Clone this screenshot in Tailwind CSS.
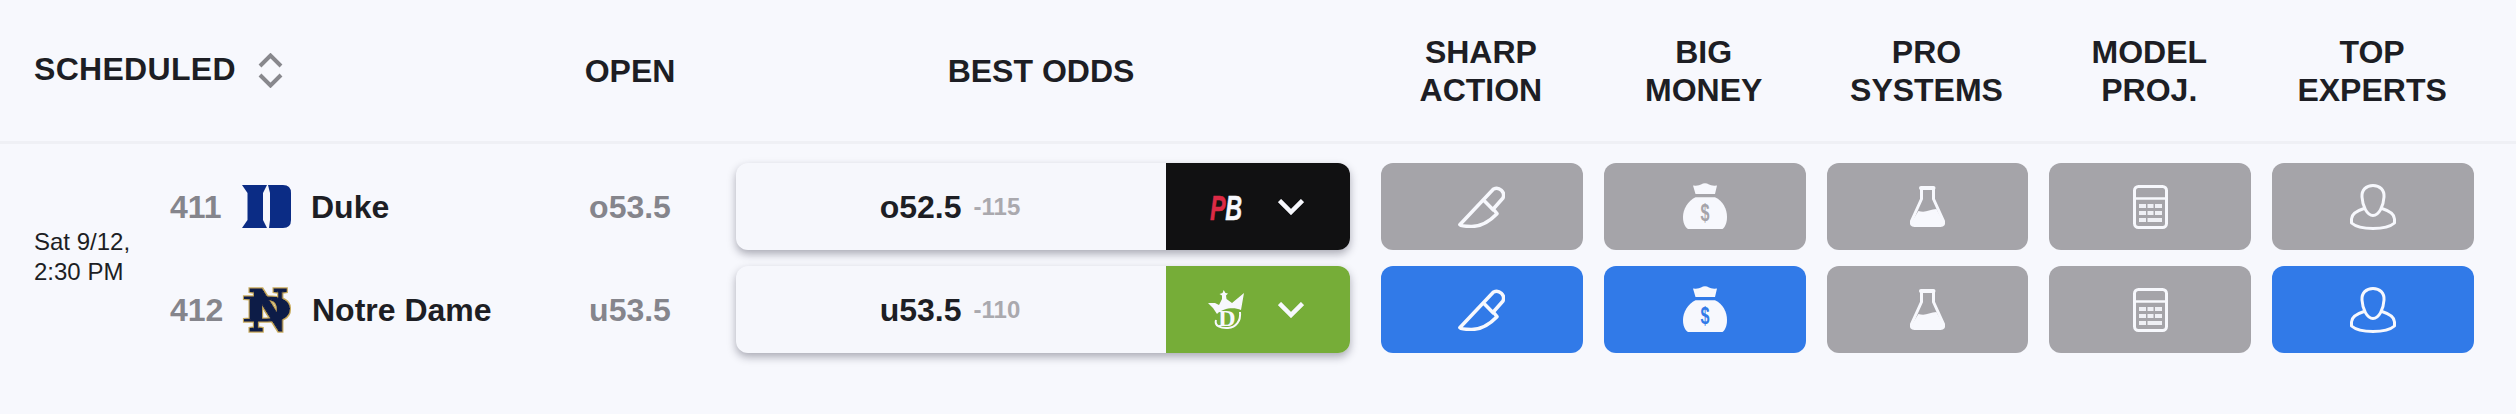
<!DOCTYPE html>
<html lang="en">
<head>
    <meta charset="UTF-8">
    <meta name="viewport" content="width=device-width, initial-scale=1.0">
    <title>Game Odds</title>
    <script src="https://cdn.jsdelivr.net/npm/@tailwindcss/browser@4"></script>
</head>
<body class="bg-[#f7f8fd] font-['Liberation_Sans',Arial,sans-serif] text-[#1d1e24] h-[414px]">

    <!-- icons shared by the signal buttons -->
    <svg class="absolute w-0 h-0">
        <filter id="gold" x="-10%" y="-10%" width="120%" height="120%">
            <feMorphology in="SourceAlpha" operator="dilate" radius="0.9" result="fat"/>
            <feFlood flood-color="#c8ab5c"/>
            <feComposite in2="fat" operator="in" result="edge"/>
            <feMerge>
                <feMergeNode in="edge"/>
                <feMergeNode in="SourceGraphic"/>
            </feMerge>
        </filter>
        <symbol id="knife" viewBox="0 0 47 42">
            <path d="M1.8 38.8 L35.5 3 A7 7 0 0 1 45 12 L35.3 23 L39 27.7 C30 37 20 40.6 13 40.4 C6 40.4 2 40 1.8 38.8 Z M27 15.5 L35.3 24" fill="none" stroke="#f7f8fd" stroke-width="3.5" stroke-linejoin="round" stroke-linecap="round"/>
        </symbol>
        <symbol id="bag" viewBox="0 0 44 47">
            <path d="M10 2.5 Q16 3 18 1.5 Q22 -1 26 1.5 Q28 3 34 2.5 L32 11 H12.5 Z" fill="#f7f8fd"/>
            <path d="M12.5 14.3 H32 C40 18 44 26 44 34 C44 40 42 44 39.5 46 H5 C2 44 0 40 0 34 C0 26 5 18 12.5 14.3 Z" fill="#f7f8fd"/>
        </symbol>
        <symbol id="flask" viewBox="0 0 35 41">
            <rect x="9" y="0" width="16.5" height="4" rx="2" fill="#f7f8fd"/>
            <path d="M11.5 3 V13 L1.5 35 Q0.5 39.5 4.5 39.5 H30.5 Q34.5 39.5 33.5 35 L23.5 13 V3" fill="none" stroke="#f7f8fd" stroke-width="3" stroke-linejoin="round"/>
            <path d="M8.4 25 Q14 26.5 19 24.5 Q23 23 26.4 23 L33.5 36 Q34 40 30.5 40 H4.5 Q1 40 1.5 36 Z" fill="#f7f8fd"/>
        </symbol>
        <symbol id="calc" viewBox="0 0 35 44">
            <rect x="1.5" y="1.5" width="32" height="41" rx="4" fill="none" stroke="#f7f8fd" stroke-width="3"/>
            <path d="M2 13.5 H33" stroke="#f7f8fd" stroke-width="2.5"/>
            <path d="M6 19 h7 v4 h-7 Z M14.5 19 h6 v4 h-6 Z M22 19 h7 v4 h-7 Z M6 26 h7 v4 h-7 Z M14.5 26 h6 v4 h-6 Z M22 26 h7 v4 h-7 Z M6 33 h7 v4 h-7 Z M14.5 33 h14.5 v4 h-14.5 Z" fill="#f7f8fd" fill-opacity="0.9"/>
        </symbol>
        <symbol id="user" viewBox="0 0 46 46">
            <path d="M23 1.5 C30 1.5 34.5 6 34 13 C33.5 22 29 31.5 23 31.5 C17 31.5 12.5 22 12 13 C11.5 6 16 1.5 23 1.5 Z" fill="none" stroke="#f7f8fd" stroke-width="3"/>
            <path d="M14 24.5 C6 27 1.5 30 1.5 35 V39 C6 43 15 44.5 23 44.5 C31 44.5 40 43 44.5 39 V35 C44.5 30 40 27 32 24.5" fill="none" stroke="#f7f8fd" stroke-width="3" stroke-linejoin="round"/>
        </symbol>
        <symbol id="chev" viewBox="0 0 26 16">
            <path d="M1.5 1.5 L13 13 L24.5 1.5" fill="none" stroke="#f7f8fd" stroke-width="4.5"/>
        </symbol>
    </svg>

    <!-- Header -->
    <div class="grid grid-cols-[560px_176px_614px_1fr] h-[144px] border-b-[3px] border-[#eff0f5] text-[32px] font-bold items-center">
        <div class="flex items-center pl-[34px]">
            <span class="-mt-1 tracking-[0.3px]">SCHEDULED</span>
            <svg class="ml-[22px] w-[25px] h-[35px]" viewBox="0 0 25 35" fill="none" stroke="#88888d" stroke-width="4">
                <path d="M2 13 L12.5 2.5 L23 13"/>
                <path d="M2 22 L12.5 32.5 L23 22"/>
            </svg>
        </div>
        <div class="text-center pr-[36px]">OPEN</div>
        <div class="text-center pr-[4px]">BEST ODDS</div>
        <div class="grid grid-cols-5 gap-[21px] ml-[30px] mr-[43px] text-center leading-[38px]">
            <div>SHARP<br>ACTION</div>
            <div>BIG<br>MONEY</div>
            <div>PRO<br>SYSTEMS</div>
            <div>MODEL<br>PROJ.</div>
            <div>TOP<br>EXPERTS</div>
        </div>
    </div>

    <!-- Game -->
    <div class="grid grid-cols-[170px_390px_176px_614px_1fr] grid-rows-[87px_87px] gap-y-4 pt-[19px] items-center">
        <div class="row-span-2 pl-[34px] text-2xl leading-[30px] -mt-[3px]">Sat 9/12,<br>2:30 PM</div>

        <!-- Duke -->
        <div class="flex items-center text-[32px] font-bold">
            <span class="w-[72px] text-[#85858c]">411</span>
            <svg class="w-[49px] h-[43px] mr-[20px]" viewBox="0 0 49 43" fill="#0b2c85">
                <path d="M0 0 H25 L21 8 V35 L25 43 H0 L5.5 35 V8 Z"/>
                <path d="M26 0 H41 Q49 0 49 8 V35 Q49 43 41 43 H27 L28 35 V8 Z"/>
            </svg>
            <span>Duke</span>
        </div>
        <div class="text-center pr-[36px] text-[32px] font-bold text-[#85858c]">o53.5</div>
        <div class="flex h-[87px] rounded-xl bg-[#f6f7fc] shadow-[0_4px_8px_rgba(30,30,50,0.35)] overflow-hidden">
            <div class="flex-1 flex items-center justify-center gap-3 pr-[2px]">
                <span class="text-[32px] font-bold">o52.5</span>
                <span class="text-2xl font-bold text-[#aaa9ae]">-115</span>
            </div>
            <div class="w-[184px] bg-[#111112] flex items-center pl-[44px]">
                <svg class="w-[32px] h-[26px] overflow-visible" viewBox="0 0 32 26">
                    <text transform="scale(0.65 1)" y="26" font-size="36" font-weight="700" font-style="italic" stroke-width="0.5"><tspan x="0" fill="#dc2a45" stroke="#dc2a45">P</tspan><tspan x="23.5" fill="#f7f8fd" stroke="#f7f8fd">B</tspan></text>
                </svg>
                <svg class="w-[26px] h-[16px] ml-[36px]"><use href="#chev"/></svg>
            </div>
        </div>
        <div class="grid grid-cols-5 gap-[21px] ml-[31px] mr-[42px] h-[87px]">
            <div class="rounded-xl flex items-center justify-center bg-[#a5a4a9]"><svg class="w-[47px] h-[42px]"><use href="#knife"/></svg></div>
            <div class="rounded-xl flex items-center justify-center bg-[#a5a4a9]">
                <svg class="w-[44px] h-[47px]" viewBox="0 0 44 47"><use href="#bag"/><text x="17.5" y="38" font-size="24" font-weight="700" textLength="9" lengthAdjust="spacingAndGlyphs" fill="#a5a4a9">$</text></svg>
            </div>
            <div class="rounded-xl flex items-center justify-center bg-[#a5a4a9]"><svg class="w-[35px] h-[41px]"><use href="#flask"/></svg></div>
            <div class="rounded-xl flex items-center justify-center bg-[#a5a4a9]"><svg class="w-[35px] h-[44px]"><use href="#calc"/></svg></div>
            <div class="rounded-xl flex items-center justify-center bg-[#a5a4a9]"><svg class="w-[46px] h-[46px]"><use href="#user"/></svg></div>
        </div>

        <!-- Notre Dame -->
        <div class="flex items-center text-[32px] font-bold">
            <span class="w-[73px] text-[#85858c]">412</span>
            <svg class="w-[50px] h-[46px] mr-[19px] overflow-visible" viewBox="0 0 50 46">
                <g filter="url(#gold)" font-family="'Liberation Serif',serif" font-weight="700" fill="#0c1f47" stroke="#0c1f47" stroke-width="1.4">
                    <text x="1" y="34" font-size="36" textLength="48" lengthAdjust="spacingAndGlyphs">D</text>
                    <text x="6" y="44" font-size="64" textLength="38" lengthAdjust="spacingAndGlyphs">N</text>
                </g>
            </svg>
            <span>Notre Dame</span>
        </div>
        <div class="text-center pr-[36px] text-[32px] font-bold text-[#85858c]">u53.5</div>
        <div class="flex h-[87px] rounded-xl bg-[#f6f7fc] shadow-[0_4px_8px_rgba(30,30,50,0.35)] overflow-hidden">
            <div class="flex-1 flex items-center justify-center gap-3 pr-[2px]">
                <span class="text-[32px] font-bold">u53.5</span>
                <span class="text-2xl font-bold text-[#aaa9ae]">-110</span>
            </div>
            <div class="w-[184px] bg-[#76ad38] flex items-center pl-[42px]">
                <svg class="w-[36px] h-[39px] overflow-visible" viewBox="0 0 36 39" fill="#f7f8fd">
                    <path d="M15.7 0 L17.5 3 L20 3.5 L18 5.5 L18.5 9 L24 13 L30 8 L36 3 L33 20 C26 17 15 18 9 24 L5 18 L0 13 L7 13 L11 15 L14 9 L14 5.5 L11.5 4 L14.5 3 Z"/>
                    <text x="19" y="36" text-anchor="middle" font-family="'Liberation Serif',serif" font-weight="700" font-size="24">D</text>
                    <path d="M8 30 C6 36 13 38.5 20 38 C28 37.5 33 31 32 22" fill="none" stroke="#f7f8fd" stroke-width="2"/>
                </svg>
                <svg class="w-[26px] h-[16px] ml-[34px]"><use href="#chev"/></svg>
            </div>
        </div>
        <div class="grid grid-cols-5 gap-[21px] ml-[31px] mr-[42px] h-[87px]">
            <div class="rounded-xl flex items-center justify-center bg-[#317ae8]"><svg class="w-[47px] h-[42px]"><use href="#knife"/></svg></div>
            <div class="rounded-xl flex items-center justify-center bg-[#317ae8]">
                <svg class="w-[44px] h-[47px]" viewBox="0 0 44 47"><use href="#bag"/><text x="17.5" y="38" font-size="24" font-weight="700" textLength="9" lengthAdjust="spacingAndGlyphs" fill="#317ae8">$</text></svg>
            </div>
            <div class="rounded-xl flex items-center justify-center bg-[#a5a4a9]"><svg class="w-[35px] h-[41px]"><use href="#flask"/></svg></div>
            <div class="rounded-xl flex items-center justify-center bg-[#a5a4a9]"><svg class="w-[35px] h-[44px]"><use href="#calc"/></svg></div>
            <div class="rounded-xl flex items-center justify-center bg-[#317ae8]"><svg class="w-[46px] h-[46px]"><use href="#user"/></svg></div>
        </div>
    </div>

</body>
</html>
